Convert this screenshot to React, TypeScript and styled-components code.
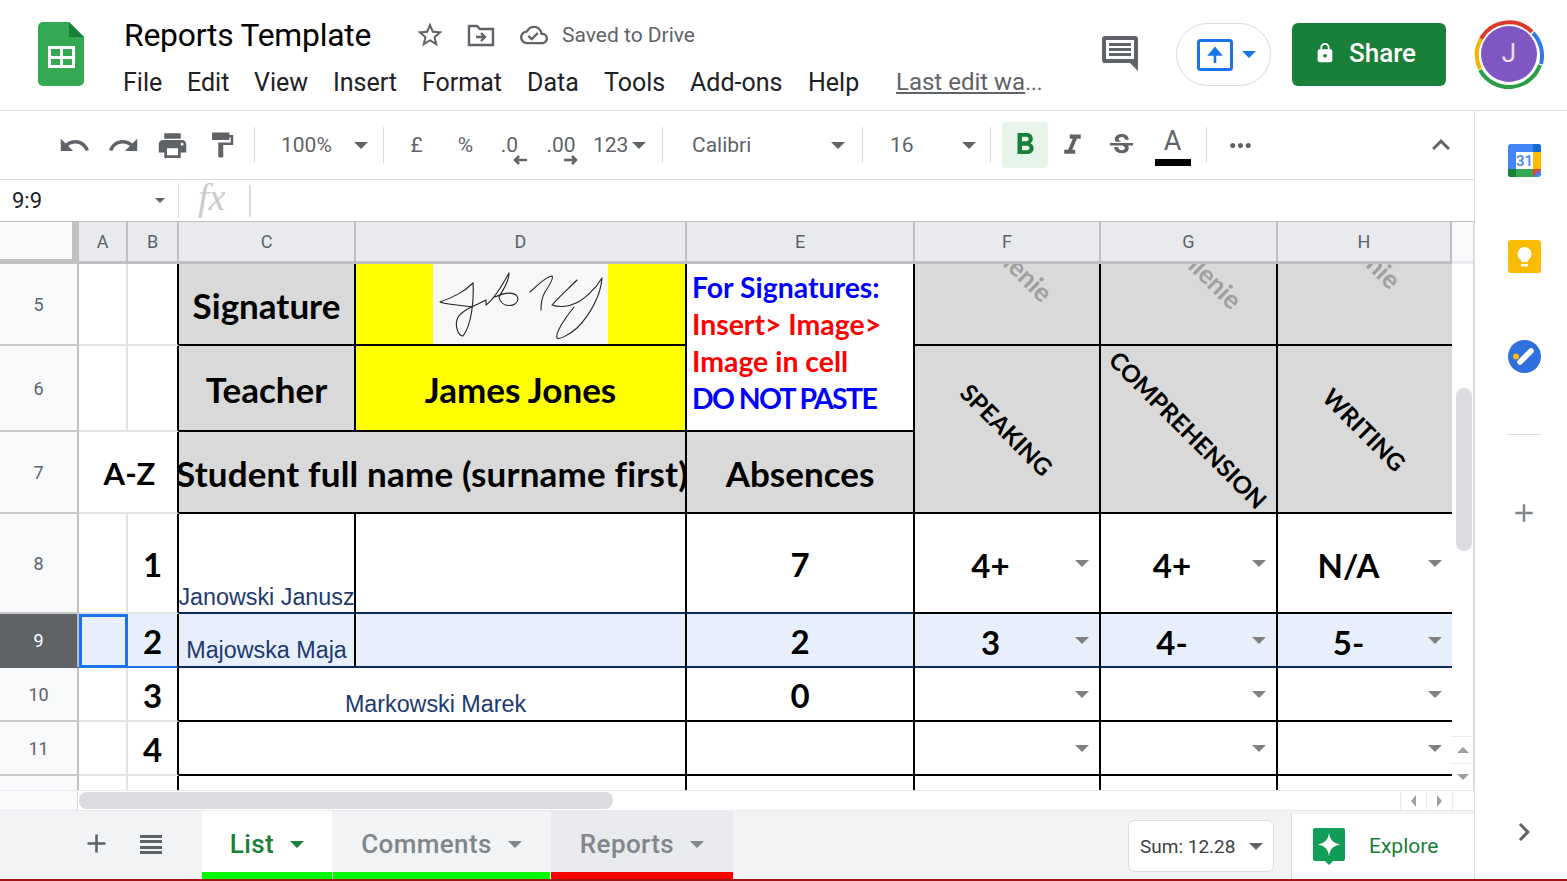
import React from "react";
import styled, { createGlobalStyle } from "styled-components";
import {
  MdUndo,
  MdRedo,
  MdPrint,
  MdFormatPaint,
  MdStarBorder,
  MdOutlineCloudDone,
  MdLock,
  MdAdd,
  MdFormatBold,
  MdFormatItalic,
  MdStrikethroughS,
  MdMoreHoriz,
  MdExpandLess,
  MdChevronRight,
} from "react-icons/md";

const GlobalStyle = createGlobalStyle`
  html, body {
    margin: 0;
    padding: 0;
    background: #fff;
    overflow: hidden;
  }
  * {
    box-sizing: border-box;
  }
`;

const UI_FONT = `Roboto, "Liberation Sans", sans-serif`;
const SHEET_FONT = `Lato, "Open Sans", sans-serif`;

const Page = styled.div`
  width: 1567px;
  height: 881px;
  display: flex;
  flex-direction: column;
  font-family: ${UI_FONT};
  border-bottom: 2px solid #a11414;
  overflow: hidden;
`;

/* ---------- header ---------- */

const Header = styled.header`
  height: 111px;
  flex: none;
  display: flex;
  align-items: flex-start;
  border-bottom: 1px solid #dadce0;
`;

const LogoBox = styled.div`
  width: 124px;
  padding: 22px 0 0 38px;
  flex: none;
`;

const TitleColumn = styled.div`
  width: 960px;
  flex: none;
  display: flex;
  flex-direction: column;
`;

const TitleRow = styled.div`
  height: 56px;
  padding-top: 14px;
  display: flex;
  align-items: center;
  color: #5f6368;
`;

const DocTitle = styled.div`
  font-size: 31.8px;
  letter-spacing: -0.2px;
  color: #000;
  width: 291px;
  flex: none;
`;

const TitleIcon = styled.div<{ $w: number }>`
  width: ${(p) => p.$w}px;
  flex: none;
  display: flex;
  align-items: center;
`;

const SavedText = styled.div`
  font-size: 21px;
  color: #5f6368;
`;

const MenuRow = styled.nav`
  display: flex;
  align-items: center;
  height: 30px;
  margin: 11px 0 0 -1px;
`;

const MenuItem = styled.div<{ $w: number }>`
  width: ${(p) => p.$w}px;
  flex: none;
  font-size: 25px;
  color: #202124;
  white-space: nowrap;
`;

const LastEdit = styled.div`
  margin-left: 13px;
  font-size: 24px;
  color: #5f6368;
  white-space: nowrap;
  span {
    text-decoration: underline;
  }
  i {
    font-style: normal;
    font-size: 22px;
  }
`;

const HeaderActions = styled.div`
  flex: 1;
  display: flex;
  align-items: center;
  height: 63px;
  margin-top: 23px;
  padding-left: 17px;
`;

const CommentBox = styled.div`
  display: flex;
  margin-top: -3px;
`;

const PresentButton = styled.div`
  width: 95px;
  height: 63px;
  margin-left: 37px;
  border: 1px solid #dadce0;
  border-radius: 32px;
  display: flex;
  align-items: center;
  justify-content: center;
  gap: 9px;
  padding-left: 6px;
`;

const ShareButton = styled.div`
  width: 154px;
  height: 63px;
  margin-left: 21px;
  background: #188038;
  border-radius: 6px;
  color: #fff;
  font-size: 26px;
  font-weight: 500;
  display: flex;
  align-items: center;
  justify-content: center;
  gap: 13px;
  padding: 0 8px 3px 0;
`;

const AvatarBox = styled.div`
  width: 72px;
  height: 72px;
  margin: -2px 0 0 27px;
  flex: none;
`;

/* ---------- main split ---------- */

const Body = styled.div`
  flex: 1;
  display: flex;
  min-height: 0;
`;

const Main = styled.div`
  width: 1474px;
  flex: none;
  display: flex;
  flex-direction: column;
`;

const SidePanel = styled.aside`
  flex: 1;
  border-left: 1px solid #dadce0;
  display: flex;
  flex-direction: column;
  align-items: center;
  padding: 31px 0 0 6px;
`;

const SideIcon = styled.div<{ $gap: number }>`
  height: 36px;
  display: flex;
  align-items: center;
  justify-content: center;
  margin-bottom: ${(p) => p.$gap}px;
`;

const SideDivider = styled.div`
  width: 34px;
  height: 1px;
  background: #dadce0;
  margin-bottom: 60px;
`;

/* ---------- toolbar ---------- */

const Toolbar = styled.div`
  height: 69px;
  flex: none;
  border-bottom: 1px solid #dadce0;
  padding: 0 13px 0 50px;
  display: flex;
  align-items: center;
  color: #5f6368;
  font-size: 21px;
`;

const ToolButton = styled.div<{ $w?: number; $active?: boolean; $color?: string }>`
  width: ${(p) => p.$w ?? 49}px;
  height: 46px;
  flex: none;
  display: flex;
  align-items: center;
  justify-content: center;
  position: relative;
  border-radius: 4px;
  background: ${(p) => (p.$active ? "#e6f4ea" : "transparent")};
  color: ${(p) => p.$color ?? "#5f6368"};
`;

const ToolSelect = styled.div<{ $w: number; $right: number }>`
  width: ${(p) => p.$w}px;
  height: 46px;
  flex: none;
  padding-right: ${(p) => p.$right}px;
  display: flex;
  align-items: center;
  justify-content: space-between;
  color: #5f6368;
`;

const ToolSep = styled.div<{ $ml?: number; $mr?: number }>`
  width: 1px;
  height: 36px;
  flex: none;
  background: #dadce0;
  margin-left: ${(p) => p.$ml ?? 0}px;
  margin-right: ${(p) => p.$mr ?? 0}px;
`;

const ToolSpacer = styled.div`
  flex: 1;
`;

const Caret = styled.span<{ $size?: number; $color?: string }>`
  display: inline-block;
  flex: none;
  width: 0;
  height: 0;
  border-left: ${(p) => p.$size ?? 7}px solid transparent;
  border-right: ${(p) => p.$size ?? 7}px solid transparent;
  border-top: ${(p) => p.$size ?? 7}px solid ${(p) => p.$color ?? "#5f6368"};
`;

const DecimalMark = styled.div`
  position: relative;
  line-height: 1;
`;

const DecimalArrow = styled.svg<{ $right: number }>`
  position: absolute;
  bottom: -9px;
  right: ${(p) => p.$right}px;
`;

const ColorLetter = styled.div`
  font-size: 27px;
  line-height: 1;
  margin: -8px 0 0 4px;
`;

const ColorBar = styled.div`
  position: absolute;
  left: 9px;
  right: 4px;
  bottom: 2px;
  height: 7px;
  background: #000;
`;

/* ---------- formula bar ---------- */

const FormulaBar = styled.div`
  height: 41px;
  flex: none;
  display: flex;
  align-items: center;
`;

const NameBox = styled.div`
  width: 179px;
  height: 35px;
  flex: none;
  padding: 0 13px 0 12px;
  display: flex;
  align-items: center;
  justify-content: space-between;
  font-size: 22px;
  color: #202124;
  border-right: 1px solid #dadce0;
`;

const FxLabel = styled.div`
  width: 72px;
  height: 32px;
  flex: none;
  padding-left: 19px;
  font-family: "Liberation Serif", serif;
  font-style: italic;
  font-size: 38px;
  line-height: 25px;
  color: #c8cacc;
  border-right: 2px solid #dadce0;
`;

/* ---------- sheet ---------- */

const SheetRow = styled.div`
  height: 569px;
  flex: none;
  display: flex;
  border-top: 1px solid #c0c0c0;
`;

const SheetGrid = styled.div`
  width: 1452px;
  flex: none;
  display: grid;
  grid-template-columns: 79px 49px 51px 177px 331px 228px 186px 177px 174px;
  grid-template-rows: 42px 82px 86px 82px 100px 54px 54px 54px 18px;
  overflow: hidden;
`;

const Cell = styled.div<{ $cols?: number; $rows?: number }>`
  grid-column: span ${(p) => p.$cols ?? 1};
  grid-row: span ${(p) => p.$rows ?? 1};
  display: flex;
  align-items: center;
  justify-content: center;
  overflow: hidden;
  min-width: 0;
  min-height: 0;
`;

const Corner = styled(Cell)`
  background: #f8f9fa;
  border-right: 7px solid #c0c0c0;
  border-bottom: 5px solid #c0c0c0;
`;

const ColumnHead = styled(Cell)`
  background: #e8eaed;
  color: #5f6368;
  font-size: 18px;
  border-right: 2px solid #c0c0c0;
  border-bottom: 3px solid #c0c0c0;
`;

const RowHead = styled(Cell)<{ $selected?: boolean }>`
  background: ${(p) => (p.$selected ? "#5f6368" : "#f8f9fa")};
  color: ${(p) => (p.$selected ? "#fff" : "#5f6368")};
  font-size: 18px;
  border-right: 2px solid #c0c0c0;
  border-bottom: 2px solid ${(p) => (p.$selected ? "#5f6368" : "#c8c8c8")};
`;

const MarginCell = styled(Cell)<{ $selected?: boolean; $focused?: boolean; $edge?: boolean }>`
  font-family: ${SHEET_FONT};
  font-weight: 700;
  font-size: 33px;
  color: #000;
  padding-top: 2px;
  background: ${(p) => (p.$selected ? "#e6effb" : "#fff")};
  border-right: 2px solid ${(p) => (p.$edge ? "#000" : "#e3e3e3")};
  border-bottom: 2px solid ${(p) => (p.$selected ? "#1a73e8" : "#e3e3e3")};
  ${(p) => p.$focused && `border: 3px solid #1a73e8;`}
`;

const SortCell = styled(MarginCell)`
  font-size: 31px;
  padding-left: 3px;
`;

const BoxCell = styled(Cell)<{ $bg?: string; $selected?: boolean; $navy?: boolean; $open?: boolean }>`
  font-family: ${SHEET_FONT};
  font-weight: 700;
  font-size: 33px;
  color: #000;
  padding-top: 2px;
  background: ${(p) => (p.$selected ? "#e6effb" : p.$bg ?? "#fff")};
  border-right: ${(p) => (p.$open ? "0" : "2px solid #000")};
  border-bottom: 2px solid ${(p) => (p.$selected || p.$navy ? "#0c2a5e" : "#000")};
  white-space: nowrap;
`;

const TitleCell = styled(BoxCell)`
  font-size: 35px;
`;

const StudentCell = styled(TitleCell)`
  letter-spacing: 0.16px;
`;

const SignatureCell = styled(BoxCell)`
  background: #ffff00;
  padding-top: 0;
`;

const SignatureImage = styled.svg`
  width: 175px;
  height: 80px;
  flex: none;
  background: #f7f7f7;
  align-self: flex-start;
`;

const NoteCell = styled(BoxCell)`
  justify-content: flex-start;
  align-items: flex-start;
  padding: 5px 0 0 5px;
  font-size: 28.4px;
`;

const NoteLines = styled.div`
  display: flex;
  flex-direction: column;
`;

const NoteLine = styled.div<{ $color: string; $tight?: boolean }>`
  height: 37px;
  line-height: 37px;
  color: ${(p) => p.$color};
  letter-spacing: ${(p) => (p.$tight ? "-1.6px" : "0")};
`;

const DiagonalCell = styled(BoxCell)`
  padding-top: 0;
  background: #d9d9d9;
`;

const DiagonalLabel = styled.div<{ $dx?: number; $dy?: number; $faded?: boolean }>`
  flex: none;
  font-size: ${(p) => (p.$faded ? 26 : 24)}px;
  color: ${(p) => (p.$faded ? "#a0a0a0" : "#000")};
  transform: translate(${(p) => p.$dx ?? 0}px, ${(p) => p.$dy ?? 0}px) rotate(45deg);
`;

const NameCell = styled(BoxCell)<{ $pad?: number; $shift?: number }>`
  font-family: "Liberation Sans", Arial, sans-serif;
  font-weight: 400;
  font-size: 23.3px;
  color: #1c3a6e;
  align-items: flex-end;
  padding-top: 0;
  padding-left: ${(p) => p.$shift ?? 0}px;
  padding-bottom: ${(p) => p.$pad ?? 2}px;
`;

const ScoreCell = styled(BoxCell)`
  justify-content: flex-start;
  padding-top: 0;
`;

const ScoreValue = styled.div`
  flex: 1;
  text-align: center;
  padding-top: 3px;
`;

const DropBox = styled.div`
  width: 33px;
  flex: none;
  display: flex;
  justify-content: flex-start;
  padding-left: 9px;
`;

const VScroll = styled.div`
  flex: 1;
  display: flex;
  flex-direction: column;
  border-right: 1px solid #dadce0;
`;

const VScrollHead = styled.div`
  height: 42px;
  flex: none;
  background: #f8f9fa;
  border-bottom: 3px solid #e8eaed;
`;

const VTrack = styled.div`
  flex: 1;
  padding: 124px 1px 0 4px;
`;

const VThumb = styled.div`
  height: 163px;
  background: #dadce0;
  border-radius: 8px;
`;

const ScrollStep = styled.div`
  height: 27px;
  flex: none;
  border-top: 1px solid #e8eaed;
  display: flex;
  align-items: center;
  justify-content: center;
`;

const UpCaret = styled(Caret)`
  transform: rotate(180deg);
`;

const HScrollRow = styled.div`
  height: 20px;
  flex: none;
  display: flex;
  border-top: 1px solid #e8eaed;
  background: #fff;
`;

const HScrollGutter = styled.div`
  width: 78px;
  flex: none;
  background: #f8f9fa;
  border-right: 1px solid #dadce0;
`;

const HTrack = styled.div`
  flex: 1;
  padding: 1px 0 1px 1px;
`;

const HThumb = styled.div`
  width: 534px;
  height: 17px;
  background: #dadce0;
  border-radius: 8px;
`;

const HStep = styled.div`
  width: 26px;
  flex: none;
  border-left: 1px solid #e8eaed;
  display: flex;
  align-items: center;
  justify-content: center;
`;

const SideCaret = styled.span<{ $dir: "left" | "right" }>`
  width: 0;
  height: 0;
  border-top: 6px solid transparent;
  border-bottom: 6px solid transparent;
  ${(p) => (p.$dir === "left" ? "border-right" : "border-left")}: 5px solid #9aa0a6;
`;

const HCorner = styled.div`
  width: 22px;
  flex: none;
  border-left: 1px solid #e8eaed;
`;

/* ---------- sheet tabs ---------- */

const TabBar = styled.div`
  flex: 1;
  display: flex;
  background: #f1f3f4;
  border-top: 1px solid #e8eaed;
`;

const TabTools = styled.div`
  width: 202px;
  flex: none;
  padding: 17px 0 0 81px;
  display: flex;
  align-items: flex-start;
  gap: 28px;
  color: #5f6368;
`;

const AllSheets = styled.div`
  width: 22px;
  height: 19px;
  margin-top: 7px;
  display: flex;
  flex-direction: column;
  justify-content: space-between;
  span {
    display: block;
    height: 3px;
    background: #5f6368;
  }
`;

const Tab = styled.div<{ $w: number; $accent: string; $active?: boolean; $bg?: string }>`
  width: ${(p) => p.$w}px;
  flex: none;
  margin-right: 1px;
  height: 69px;
  background: ${(p) => (p.$active ? "#fff" : p.$bg ?? "#f1f3f4")};
  border-bottom: 8px solid ${(p) => p.$accent};
  color: ${(p) => (p.$active ? "#188038" : "#80868b")};
  font-size: 26px;
  font-weight: 500;
  letter-spacing: 0.4px;
  display: flex;
  align-items: center;
  justify-content: center;
  gap: 16px;
  padding-top: 5px;
`;

const TabSpacer = styled.div`
  flex: 1;
`;

const SumBox = styled.div`
  width: 146px;
  height: 52px;
  margin-top: 9px;
  flex: none;
  background: #fff;
  border: 1px solid #dadce0;
  border-radius: 7px;
  display: flex;
  align-items: center;
  justify-content: space-between;
  padding: 0 10px 0 11px;
  font-size: 19px;
  color: #3c4043;
`;

const ExploreBox = styled.div`
  width: 183px;
  margin: 3px 0 0 17px;
  flex: none;
  background: #fff;
  border-left: 1px solid #dadce0;
  display: flex;
  align-items: center;
  padding: 0 0 2px 21px;
  gap: 24px;
  color: #188038;
  font-size: 21px;
`;

const SheetsLogo = () => (
  <svg width="46" height="64" viewBox="0 0 46 64">
    <path d="M5 0h26l15 15v44a5 5 0 0 1-5 5H5a5 5 0 0 1-5-5V5a5 5 0 0 1 5-5z" fill="#34a853" />
    <path d="M31 0l15 15H31z" fill="#188038" />
    <path d="M10 24h27v22H10z" fill="#fff" />
    <path d="M13 27h9v7h-9zM25 27h9v7h-9zM13 37h9v6h-9zM25 37h9v6h-9z" fill="#34a853" />
  </svg>
);

const MoveIcon = () => (
  <svg width="28" height="26" viewBox="0 0 28 26" fill="none" stroke="#5f6368" strokeWidth="2.4">
    <path d="M2 4h8l3 3h13v16H2z" />
    <path d="M9 15h8M14 11l4 4-4 4" />
  </svg>
);

const CommentIcon = () => (
  <svg width="38" height="36" viewBox="0 0 38 36">
    <path d="M4 1h30a3 3 0 0 1 3 3v32l-8-8H4a3 3 0 0 1-3-3V4a3 3 0 0 1 3-3z" fill="#5f6368" />
    <path d="M5 5h28v19H5z" fill="#fff" />
    <path d="M8 8h22v3H8zM8 13h22v3H8zM8 18h22v3H8z" fill="#5f6368" />
  </svg>
);

const PresentIcon = () => (
  <svg width="36" height="32" viewBox="0 0 36 32" fill="none">
    <rect x="1.500" y="1.500" width="33" height="29" rx="2" stroke="#1a73e8" strokeWidth="3" />
    <path d="M18 24V12M13 15.500l5-6 5 6z" stroke="#1a73e8" strokeWidth="2.600" fill="#1a73e8" />
  </svg>
);

const Avatar = () => (
  <svg width="72" height="72" viewBox="0 0 72 72">
    <g fill="none" strokeWidth="4">
      <path d="M8 21 A32 32 0 0 1 59 14" stroke="#db3a2d" />
      <path d="M60 15 A33 33 0 0 1 68 46" stroke="#2f7be5" />
      <path d="M67 47 A33 33 0 0 1 7 52" stroke="#2a9d47" />
      <path d="M7 51 A33 33 0 0 1 8 21" stroke="#f4b400" />
    </g>
    <circle cx="36" cy="36" r="28" fill="#7e57c2" />
    <text x="36" y="44" textAnchor="middle" fontFamily="Roboto, sans-serif" fontSize="26" fill="#e8dff5">
      J
    </text>
  </svg>
);

const CalendarIcon = () => (
  <svg width="33" height="33" viewBox="0 0 33 33">
    <rect width="33" height="33" rx="3" fill="#4285f4" />
    <path d="M8 8h17v17H8z" fill="#fff" />
    <path d="M25 0h5a3 3 0 0 1 3 3v5h-8z" fill="#1967d2" />
    <path d="M25 8h8v17h-8z" fill="#fbbc04" />
    <path d="M8 25h17v8H8z" fill="#34a853" />
    <path d="M0 25h8v8H3a3 3 0 0 1-3-3z" fill="#188038" />
    <path d="M25 25h8l-8 8z" fill="#ea4335" />
    <text x="16.500" y="22" textAnchor="middle" fontFamily="Roboto, sans-serif" fontWeight="500" fontSize="15" fill="#4285f4">
      31
    </text>
  </svg>
);

const KeepIcon = () => (
  <svg width="33" height="33" viewBox="0 0 33 33">
    <rect width="33" height="33" rx="3" fill="#fbbc04" />
    <circle cx="16.500" cy="14" r="7" fill="#fff" />
    <path d="M13 20h7v2h-7z" fill="#fff" />
    <path d="M13 24h7v2.500h-7z" fill="#fff" />
  </svg>
);

const TasksIcon = () => (
  <svg width="33" height="33" viewBox="0 0 33 33">
    <circle cx="16.500" cy="16.500" r="16.500" fill="#2f6fde" />
    <circle cx="8" cy="16.500" r="3" fill="#fbbc04" />
    <path d="M12 22L23 11" stroke="#fff" strokeWidth="5.500" strokeLinecap="round" />
  </svg>
);

const ExploreIcon = () => (
  <svg width="32" height="37" viewBox="0 0 32 37">
    <path d="M2 0h28a2 2 0 0 1 2 2v29a2 2 0 0 1-2 2H20l-4 4-4-4H2a2 2 0 0 1-2-2V2a2 2 0 0 1 2-2z" fill="#0f9d58" />
    <path d="M16 5c1 7 4 10 11 11.500-7 1.500-10 4.500-11 11.500-1-7-4-10-11-11.500 7-1.500 10-4.500 11-11.500z" fill="#fff" />
  </svg>
);

const Signature = () => (
  <SignatureImage viewBox="0 0 175 80">
    <g fill="none" stroke="#222" strokeWidth="1.100" strokeLinecap="round" strokeLinejoin="round">
      <path d="M40 19 C30 29 20 33 7 38 C15 41 28 41 39 43" />
      <path d="M40 19 C41 35 39 60 30 72 C25 72 22 62 24 56 C25 50 33 45 45 40 L53 36 L53 41 C60 36 70 20 76 9 C76 20 68 28 66 33 C68 44 84 44 85 35 C84 27 72 28 62 33" />
      <path d="M97 28 C104 22 113 12 119 12 C121 14 116 22 112 28 C109 33 108 40 108 46" />
      <path d="M144 16 C135 25 125 34 119 41 C127 44 137 42 143 39 C150 36 162 26 169 14 C168 30 158 50 144 64 C136 71 126 76 124 74 C122 69 132 54 141 43" />
    </g>
  </SignatureImage>
);

const Score = ({ value, selected, open }: { value?: string; selected?: boolean; open?: boolean }) => (
  <ScoreCell $selected={selected} $open={open}>
    <ScoreValue>{value}</ScoreValue>
    <DropBox>
      <Caret $size={7} $color="#808080" />
    </DropBox>
  </ScoreCell>
);

const COLUMN_HEADS = ["A", "B", "C", "D", "E", "F", "G", "H"];

const App: React.FC = () => {
  return (
    <Page>
      <GlobalStyle />
      <Header>
        <LogoBox>
          <SheetsLogo />
        </LogoBox>
        <TitleColumn>
          <TitleRow>
            <DocTitle>Reports Template</DocTitle>
            <TitleIcon $w={52}>
              <MdStarBorder size={30} />
            </TitleIcon>
            <TitleIcon $w={53}>
              <MoveIcon />
            </TitleIcon>
            <TitleIcon $w={42}>
              <MdOutlineCloudDone size={28} />
            </TitleIcon>
            <SavedText>Saved to Drive</SavedText>
          </TitleRow>
          <MenuRow>
            <MenuItem $w={64}>File</MenuItem>
            <MenuItem $w={67}>Edit</MenuItem>
            <MenuItem $w={79}>View</MenuItem>
            <MenuItem $w={89}>Insert</MenuItem>
            <MenuItem $w={105}>Format</MenuItem>
            <MenuItem $w={77}>Data</MenuItem>
            <MenuItem $w={86}>Tools</MenuItem>
            <MenuItem $w={118}>Add-ons</MenuItem>
            <MenuItem $w={75}>Help</MenuItem>
            <LastEdit>
              <span>Last edit wa</span>
              <i>...</i>
            </LastEdit>
          </MenuRow>
        </TitleColumn>
        <HeaderActions>
          <CommentBox>
            <CommentIcon />
          </CommentBox>
          <PresentButton>
            <PresentIcon />
            <Caret $size={7} $color="#1a73e8" />
          </PresentButton>
          <ShareButton>
            <MdLock size={22} />
            Share
          </ShareButton>
          <AvatarBox>
            <Avatar />
          </AvatarBox>
        </HeaderActions>
      </Header>

      <Body>
        <Main>
          <Toolbar>
            <ToolButton>
              <MdUndo size={33} />
            </ToolButton>
            <ToolButton>
              <MdRedo size={33} />
            </ToolButton>
            <ToolButton>
              <MdPrint size={33} />
            </ToolButton>
            <ToolButton $w={50}>
              <MdFormatPaint size={30} />
            </ToolButton>
            <ToolSep $ml={7} $mr={26} />
            <ToolSelect $w={102} $right={15}>
              100%
              <Caret />
            </ToolSelect>
            <ToolSep $mr={8} />
            <ToolButton>£</ToolButton>
            <ToolButton>%</ToolButton>
            <ToolButton $w={39}>
              <DecimalMark>
                .0
                <DecimalArrow $right={-9} width="14" height="10" viewBox="0 0 14 10">
                  <path d="M14 5H4M6 1L2 5l4 4" fill="none" stroke="#5f6368" strokeWidth="2.500" />
                </DecimalArrow>
              </DecimalMark>
            </ToolButton>
            <ToolButton $w={64}>
              <DecimalMark>
                .00
                <DecimalArrow $right={-2} width="14" height="10" viewBox="0 0 14 10">
                  <path d="M0 5h10M8 1l4 4-4 4" fill="none" stroke="#5f6368" strokeWidth="2.500" />
                </DecimalArrow>
              </DecimalMark>
            </ToolButton>
            <ToolSelect $w={62} $right={9}>
              123
              <Caret />
            </ToolSelect>
            <ToolSep $ml={7} $mr={29} />
            <ToolSelect $w={170} $right={17}>
              Calibri
              <Caret />
            </ToolSelect>
            <ToolSep $mr={27} />
            <ToolSelect $w={100} $right={14}>
              16
              <Caret />
            </ToolSelect>
            <ToolSep $mr={11} />
            <ToolButton $w={46} $active $color="#188038">
              <MdFormatBold size={36} />
            </ToolButton>
            <ToolButton>
              <MdFormatItalic size={33} />
            </ToolButton>
            <ToolButton>
              <MdStrikethroughS size={31} />
            </ToolButton>
            <ToolButton>
              <ColorLetter>A</ColorLetter>
              <ColorBar />
            </ToolButton>
            <ToolSep $ml={11} $mr={9} />
            <ToolButton>
              <MdMoreHoriz size={31} />
            </ToolButton>
            <ToolSpacer />
            <ToolButton $w={40}>
              <MdExpandLess size={36} />
            </ToolButton>
          </Toolbar>

          <FormulaBar>
            <NameBox>
              9:9
              <Caret $size={5} />
            </NameBox>
            <FxLabel>fx</FxLabel>
          </FormulaBar>

          <SheetRow>
            <SheetGrid>
              <Corner />
              {COLUMN_HEADS.map((name) => (
                <ColumnHead key={name}>{name}</ColumnHead>
              ))}

              <RowHead>5</RowHead>
              <MarginCell />
              <MarginCell $edge />
              <TitleCell $bg="#d9d9d9">Signature</TitleCell>
              <SignatureCell>
                <Signature />
              </SignatureCell>
              <NoteCell $rows={2}>
                <NoteLines>
                  <NoteLine $color="#0000ff">For Signatures:</NoteLine>
                  <NoteLine $color="#ff0000">Insert&gt; Image&gt;</NoteLine>
                  <NoteLine $color="#ff0000">Image in cell</NoteLine>
                  <NoteLine $color="#0000ff" $tight>
                    DO NOT PASTE
                  </NoteLine>
                </NoteLines>
              </NoteCell>
              <DiagonalCell>
                <DiagonalLabel $faded $dx={22} $dy={-27}>
                  ienie
                </DiagonalLabel>
              </DiagonalCell>
              <DiagonalCell>
                <DiagonalLabel $faded $dx={27} $dy={-22}>
                  llenie
                </DiagonalLabel>
              </DiagonalCell>
              <DiagonalCell $open>
                <DiagonalLabel $faded $dx={17} $dy={-35}>
                  inie
                </DiagonalLabel>
              </DiagonalCell>

              <RowHead>6</RowHead>
              <MarginCell />
              <MarginCell $edge />
              <TitleCell $bg="#d9d9d9">Teacher</TitleCell>
              <TitleCell $bg="#ffff00">James Jones</TitleCell>
              <DiagonalCell $rows={2}>
                <DiagonalLabel>SPEAKING</DiagonalLabel>
              </DiagonalCell>
              <DiagonalCell $rows={2}>
                <DiagonalLabel>COMPREHENSION</DiagonalLabel>
              </DiagonalCell>
              <DiagonalCell $rows={2} $open>
                <DiagonalLabel>WRITING</DiagonalLabel>
              </DiagonalCell>

              <RowHead>7</RowHead>
              <SortCell $cols={2} $edge>
                A-Z
              </SortCell>
              <StudentCell $cols={2} $bg="#d9d9d9">
                Student full name (surname first)
              </StudentCell>
              <TitleCell $bg="#d9d9d9">Absences</TitleCell>

              <RowHead>8</RowHead>
              <MarginCell />
              <MarginCell $edge>1</MarginCell>
              <NameCell $navy $pad={1}>
                Janowski Janusz
              </NameCell>
              <BoxCell $navy />
              <BoxCell $navy>7</BoxCell>
              <Score value="4+" />
              <Score value="4+" />
              <Score value="N/A" open />

              <RowHead $selected>9</RowHead>
              <MarginCell $selected $focused />
              <MarginCell $selected $edge>
                2
              </MarginCell>
              <NameCell $selected>Majowska Maja</NameCell>
              <BoxCell $selected />
              <BoxCell $selected>2</BoxCell>
              <Score value="3" selected />
              <Score value="4-" selected />
              <Score value="5-" selected open />

              <RowHead>10</RowHead>
              <MarginCell />
              <MarginCell $edge>3</MarginCell>
              <NameCell $cols={2} $shift={7}>
                Markowski Marek
              </NameCell>
              <BoxCell>0</BoxCell>
              <Score />
              <Score />
              <Score open />

              <RowHead>11</RowHead>
              <MarginCell />
              <MarginCell $edge>4</MarginCell>
              <BoxCell $cols={2} />
              <BoxCell />
              <Score />
              <Score />
              <Score open />

              <RowHead />
              <MarginCell />
              <MarginCell $edge />
              <BoxCell $cols={2} />
              <BoxCell />
              <BoxCell />
              <BoxCell />
              <BoxCell $open />
            </SheetGrid>
            <VScroll>
              <VScrollHead />
              <VTrack>
                <VThumb />
              </VTrack>
              <ScrollStep>
                <UpCaret $size={6} $color="#9aa0a6" />
              </ScrollStep>
              <ScrollStep>
                <Caret $size={6} $color="#9aa0a6" />
              </ScrollStep>
            </VScroll>
          </SheetRow>

          <HScrollRow>
            <HScrollGutter />
            <HTrack>
              <HThumb />
            </HTrack>
            <HStep>
              <SideCaret $dir="left" />
            </HStep>
            <HStep>
              <SideCaret $dir="right" />
            </HStep>
            <HCorner />
          </HScrollRow>

          <TabBar>
            <TabTools>
              <MdAdd size={31} />
              <AllSheets>
                <span />
                <span />
                <span />
                <span />
              </AllSheets>
            </TabTools>
            <Tab $w={130} $accent="#00ff00" $active>
              List
              <Caret $size={7} $color="#188038" />
            </Tab>
            <Tab $w={217} $accent="#00ff00">
              Comments
              <Caret $size={7} $color="#80868b" />
            </Tab>
            <Tab $w={182} $accent="#ff0000" $bg="#e8eaed">
              Reports
              <Caret $size={7} $color="#80868b" />
            </Tab>
            <TabSpacer />
            <SumBox>
              Sum: 12.28
              <Caret $size={7} />
            </SumBox>
            <ExploreBox>
              <ExploreIcon />
              Explore
            </ExploreBox>
          </TabBar>
        </Main>

        <SidePanel>
          <SideIcon $gap={60}>
            <CalendarIcon />
          </SideIcon>
          <SideIcon $gap={64}>
            <KeepIcon />
          </SideIcon>
          <SideIcon $gap={60}>
            <TasksIcon />
          </SideIcon>
          <SideDivider />
          <SideIcon $gap={283}>
            <MdAdd size={30} color="#80868b" />
          </SideIcon>
          <SideIcon $gap={0}>
            <MdChevronRight size={36} color="#5f6368" />
          </SideIcon>
        </SidePanel>
      </Body>
    </Page>
  );
};

export default App;
